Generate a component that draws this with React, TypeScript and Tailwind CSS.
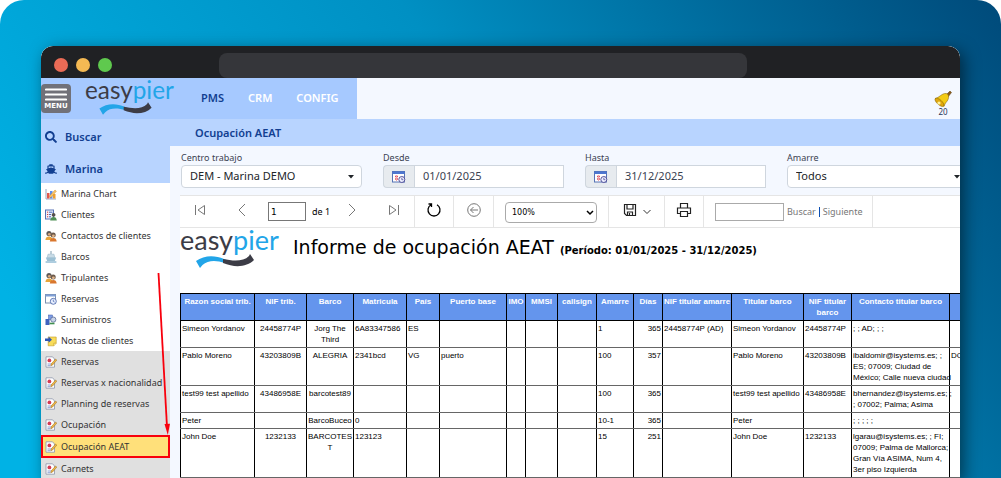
import { useState } from "react";
import { FaSearch, FaShip } from "react-icons/fa";

type IconName =
  | "chart"
  | "client"
  | "people"
  | "boat"
  | "calendar"
  | "supply"
  | "note"
  | "report";

const marinaLinks: { label: string; icon: IconName }[] = [
  { label: "Marina Chart", icon: "chart" },
  { label: "Clientes", icon: "client" },
  { label: "Contactos de clientes", icon: "people" },
  { label: "Barcos", icon: "boat" },
  { label: "Tripulantes", icon: "people" },
  { label: "Reservas", icon: "calendar" },
  { label: "Suministros", icon: "supply" },
  { label: "Notas de clientes", icon: "note" },
];

const reportLinks = [
  "Reservas",
  "Reservas x nacionalidad",
  "Planning de reservas",
  "Ocupación",
  "Ocupación AEAT",
  "Carnets",
];

const columns = [
  { title: "Razon social trib.", width: "w-[74px]", align: "text-left" },
  { title: "NIF trib.", width: "w-[52px]", align: "text-center" },
  { title: "Barco", width: "w-[47px]", align: "text-center" },
  { title: "Matricula", width: "w-[53px]", align: "text-left" },
  { title: "País", width: "w-[33px]", align: "text-left" },
  { title: "Puerto base", width: "w-[67px]", align: "text-left" },
  { title: "IMO", width: "w-[19px]", align: "text-left" },
  { title: "MMSI", width: "w-[32px]", align: "text-left" },
  { title: "callsign", width: "w-[39px]", align: "text-left" },
  { title: "Amarre", width: "w-[37px]", align: "text-left" },
  { title: "Días", width: "w-[29px]", align: "text-right" },
  { title: "NIF titular amarre", width: "w-[69px]", align: "text-left" },
  { title: "Titular barco", width: "w-[72px]", align: "text-left" },
  { title: "NIF titular\nbarco", width: "w-[48px]", align: "text-left" },
  { title: "Contacto titular barco", width: "w-[98px]", align: "text-left" },
  { title: "", width: "w-[60px]", align: "text-left" },
];

const rows = [
  ["Simeon Yordanov", "24458774P", "Jorg The\nThird", "6A83347586", "ES", "", "", "", "", "1", "365", "24458774P (AD)", "Simeon Yordanov", "24458774P", "; ; AD; ; ;", ""],
  ["Pablo Moreno", "43203809B", "ALEGRIA", "2341bcd", "VG", "puerto", "", "", "", "100", "357", "", "Pablo Moreno", "43203809B", "ibaldomir@isystems.es; ;\nES; 07009; Ciudad de\nMéxico; Calle nueva ciudad", "DC"],
  ["test99 test apellido", "43486958E", "barcotest89", "", "", "", "", "", "", "100", "365", "", "test99 test apellido", "43486958E", "bhernandez@isystems.es; ;\n; 07002; Palma; Asima", ""],
  ["Peter", "", "BarcoBuceo", "0", "", "", "", "", "", "10-1", "365", "", "Peter", "", "; ; ; ; ;", ""],
  ["John Doe", "1232133", "BARCOTES\nT", "123123", "", "", "", "", "", "15", "251", "", "John Doe", "1232133", "lgarau@isystems.es; ; FI;\n07009; Palma de Mallorca;\nGran Vía ASIMA, Num 4,\n3er piso Izquierda", ""],
];

function MenuIcon({ name }: { name: IconName }) {
  return (
    <svg viewBox="0 0 12 12" className="size-3 shrink-0" aria-hidden="true">
      {name === "chart" && (
        <>
          <path d="M1 1v10h10" fill="none" stroke="#9aa7c0" />
          <rect x="2" y="5" width="2.5" height="5.5" fill="#e2574c" />
          <rect x="5" y="3" width="2.5" height="7.5" fill="#5b8def" />
          <rect x="8" y="6" width="2.5" height="4.5" fill="#f0a030" />
          <path d="M4 8.5 10 2l1.4 1.2L6 9.6z" fill="#f7c56b" stroke="#c77d1c" strokeWidth=".4" />
        </>
      )}
      {name === "client" && (
        <>
          <rect x=".5" y="1" width="8" height="9" fill="#eef2fb" stroke="#5872b5" />
          <path d="M2 3.2h1.2M2 5.5h1.2M2 7.8h1.2" stroke="#d33" />
          <path d="M4 3.2h3.5M4 5.5h2M4 7.8h2" stroke="#4766b8" />
          <circle cx="8.6" cy="5.8" r="1.9" fill="#55504c" />
          <path d="M5.2 11.6c.2-2.6 1.6-3.6 3.4-3.6s3 1 3.2 3.6z" fill="#4f8f55" />
        </>
      )}
      {name === "people" && (
        <>
          <circle cx="4" cy="3.6" r="2.6" fill="#5f5a57" />
          <circle cx="4.3" cy="4.3" r="1.4" fill="#d9a77a" />
          <path d="M.4 10c.2-2.7 1.6-3.6 3.6-3.6s3 .8 3.4 3.6z" fill="#e7a53a" />
          <circle cx="8.2" cy="5" r="2.5" fill="#6c5a4b" />
          <circle cx="8.4" cy="5.8" r="1.4" fill="#e0b48a" />
          <path d="M4.8 11.6c.2-2.7 1.6-3.6 3.5-3.6s3.1.9 3.4 3.6z" fill="#d9772e" />
        </>
      )}
      {name === "boat" && (
        <>
          <path d="M6 0v3" stroke="#7f9db0" />
          <path d="M3 3.2h6l.8 3.6H2.2z" fill="#c8dbe6" stroke="#8fb0c2" strokeWidth=".5" />
          <path d="M.8 6.6h10.4L9.8 10H2.2z" fill="#9cc0d4" />
          <path d="M.6 11h10.8" stroke="#5f9cc0" />
        </>
      )}
      {name === "calendar" && (
        <>
          <rect x=".5" y="1.5" width="10" height="8.5" fill="#fff" stroke="#7a8fae" />
          <rect x=".5" y="1.5" width="10" height="2" fill="#7f9fd6" />
          <circle cx="8.3" cy="8.3" r="3" fill="#e9f0ff" stroke="#4461a8" strokeWidth=".8" />
          <path d="M8.3 6.6v1.8l1.3.6" fill="none" stroke="#4461a8" strokeWidth=".7" />
        </>
      )}
      {name === "supply" && (
        <>
          <rect x=".5" y="5" width="4" height="6" fill="#3f63c0" />
          <rect x="3.5" y="1" width="4" height="4.5" fill="#7c9be4" stroke="#3c5aa8" strokeWidth=".5" />
          <circle cx="8.3" cy="5.6" r="2.6" fill="#c8d3e8" stroke="#4a5d8d" strokeWidth=".7" />
          <path d="M4.5 9.5h5" stroke="#3f8f4f" strokeWidth="1.6" />
        </>
      )}
      {name === "note" && (
        <>
          <path d="M3.2 2h8v6.2l-2.4 2.6H3.2z" fill="#f8dc5a" stroke="#c39a24" strokeWidth=".6" />
          <path d="M11.2 8.2H8.8v2.6" fill="#fff3b0" stroke="#c39a24" strokeWidth=".6" />
          <path d="M0 3.4h3.6V1.6L7 4.7 3.6 7.8V6H0z" fill="#2d55b5" />
        </>
      )}
      {name === "report" && (
        <>
          <path d="M1 .8h6.5L9.5 3v8.2H1z" fill="#fff" stroke="#8a93a8" strokeWidth=".8" />
          <circle cx="4.4" cy="4.4" r="1.9" fill="#d43c55" />
          <path d="M2.5 8h4.6M2.5 9.7h3" stroke="#7089c9" strokeWidth=".8" />
          <path d="m5.8 9.8.5-2L10.6 3l1.2 1.1-4.2 4.9z" fill="#f2b944" stroke="#96691c" strokeWidth=".5" />
        </>
      )}
    </svg>
  );
}

function Logo({ className }: { className: string }) {
  return (
    <svg viewBox="0 -7 100 45" className={className} role="img" aria-label="easypier">
      <text x="0" y="19" fontFamily="Lato, sans-serif" fontSize="27" fontWeight="400">
        <tspan fill="#3c3c46">easy</tspan>
        <tspan fill="#22a5e8">pier</tspan>
      </text>
      <path d="M16 30c8-6 19-6 28-2l4 1.600-3 2.400c-9-3-17-3-22.500 2L20 37z" fill="#22a5e8" />
      <path d="M43 28c10 2 20 3 26-3l1-2 4 6c-7 7-19 8-31 3z" fill="#3c3c46" />
    </svg>
  );
}

function CalendarButton({ label }: { label: string }) {
  return (
    <button
      type="button"
      aria-label={label}
      className="flex w-[31px] shrink-0 items-center justify-center rounded-l border border-r-0 border-[#cfd6de] bg-[#e7ebef]"
    >
      <svg viewBox="0 0 14 14" className="size-3.5">
        <rect x=".5" y="1.500" width="12" height="10.500" fill="#fff" stroke="#5572b5" />
        <rect x=".5" y="1.500" width="12" height="2.500" fill="#4d76d0" />
        <path d="M3 6.500h3M3 9h3" stroke="#e0525e" strokeWidth="1.500" />
        <path d="M4.500 5v6" stroke="#f3a3a8" />
        <circle cx="9.800" cy="9.500" r="3" fill="#eef0ff" stroke="#53529a" />
        <path d="M9.800 7.800v1.900h1.500" fill="none" stroke="#53529a" strokeWidth=".8" />
      </svg>
    </button>
  );
}

function DateField({ id, label, initial }: { id: string; label: string; initial: string }) {
  const [value, setValue] = useState(initial);

  return (
    <div className="w-[181px] shrink-0">
      <label htmlFor={id} className="block text-[9px] leading-3 text-[#3b4252]">
        {label}
      </label>
      <div className="mt-px flex h-[23px]">
        <CalendarButton label={`${label} calendario`} />
        <input
          id={id}
          type="text"
          value={value}
          onChange={(e) => setValue(e.target.value)}
          className="w-full min-w-0 border border-[#cfd6de] bg-white px-2 text-[11px] text-[#3b4252]"
        />
      </div>
    </div>
  );
}

function SelectField({ id, label, option }: { id: string; label: string; option: string }) {
  return (
    <div className="w-[181px] shrink-0">
      <label htmlFor={id} className="block text-[9px] leading-3 text-[#3b4252]">
        {label}
      </label>
      <div className="relative mt-px">
        <select
          id={id}
          className="block h-[23px] w-full appearance-none rounded border border-[#cfd6de] bg-white px-2 text-[11px] text-[#212529]"
        >
          <option>{option}</option>
        </select>
        <svg viewBox="0 0 6 4" className="pointer-events-none absolute top-2.5 right-2 h-1 w-1.5">
          <path d="M0 0h6L3 3.500z" fill="#212529" />
        </svg>
      </div>
    </div>
  );
}

function BrowserBar() {
  return (
    <div className="flex h-8 items-end rounded-t-xl bg-[#202124] pl-[13px]">
      <div className="flex gap-2 self-center pt-1.5">
        <span className="size-3.5 rounded-full bg-[#ea6b56]" />
        <span className="size-3.5 rounded-full bg-[#f5b953]" />
        <span className="size-3.5 rounded-full bg-[#5fc94e]" />
      </div>
      <div className="mr-[213px] ml-[107px] h-[25px] flex-1 rounded-lg bg-[#35363a]" />
    </div>
  );
}

function Header() {
  return (
    <header className="flex h-[41px] justify-between bg-[#f4f8ff]">
      <div className="flex w-[316px] items-center bg-[#a6c9ff]">
        <button
          type="button"
          className="flex h-[29px] w-[30px] flex-col items-center rounded-sm bg-[#717179] pt-1 text-white"
        >
          <svg viewBox="0 0 22 14" className="h-3.5 w-[22px]" aria-hidden="true">
            <path d="M1 1.500h20M1 6.500h20M1 11.500h20" stroke="#fff" strokeWidth="2.200" strokeLinecap="round" />
          </svg>
          <span className="font-['DejaVu_Sans',sans-serif] text-[7px] leading-2 font-bold">MENU</span>
        </button>
        <Logo className="-mt-1.5 ml-3.5 h-[41px] w-[90px]" />
        <nav className="ml-[26px] flex gap-6 text-[11px] font-semibold text-white">
          <a href="#pms" className="text-[#123f91]">
            PMS
          </a>
          <a href="#crm">CRM</a>
          <a href="#config">CONFIG</a>
        </nav>
      </div>
      <button type="button" aria-label="Avisos" className="flex flex-col items-center pt-3 pr-2 text-[8px] leading-2 text-[#27365a]">
        <svg viewBox="0 0 18 18" className="size-[18px]">
          <path d="m12 5 4-4 1.500 1.500L14 7z" fill="#8a5a18" stroke="#5d3d10" strokeWidth=".5" />
          <path d="M1 8.500C5 8 8 3 12 3.500c3 .5 3 4 2 6-1 2.500-3 3-4 7z" fill="#f3cb14" stroke="#8f6c0a" strokeWidth=".6" />
          <ellipse cx="5.500" cy="12.300" rx="2.400" ry="5.600" transform="rotate(-48 5.500 12.300)" fill="#e0a80e" stroke="#8f6c0a" strokeWidth=".6" />
          <circle cx="5" cy="13" r="1.600" fill="#fff09a" />
        </svg>
        20
      </button>
    </header>
  );
}

function Sidebar() {
  return (
    <aside className="relative w-[129px] shrink-0 bg-white text-[9px] text-[#333]">
      <div className="bg-[#b8d4ff] text-[11px] font-semibold text-[#123f91]">
        <a href="#buscar" className="flex h-9 items-center gap-2 pl-1">
          <FaSearch className="size-3" />
          Buscar
        </a>
        <a href="#marina" className="flex h-7 items-center gap-2 pl-1">
          <FaShip className="size-3" />
          Marina
        </a>
      </div>
      <ul>
        {marinaLinks.map((link) => (
          <li key={link.label}>
            <a href="#marina" className="flex h-[21px] items-center gap-1 pl-1 whitespace-nowrap">
              <MenuIcon name={link.icon} />
              {link.label}
            </a>
          </li>
        ))}
      </ul>
      <ul className="bg-[#e0e0e0]">
        {reportLinks.map((label) => (
          <li key={label}>
            <a
              href="#informes"
              className={
                label === "Ocupación AEAT"
                  ? "flex h-[23px] items-center gap-1 bg-[#ffe07a] pl-1 whitespace-nowrap outline-2 -outline-offset-2 outline-[#f8000c]"
                  : "flex h-[21px] items-center gap-1 pl-1 whitespace-nowrap"
              }
            >
              <MenuIcon name="report" />
              {label}
            </a>
          </li>
        ))}
      </ul>
      <svg viewBox="0 0 16 166" className="absolute top-[153px] right-0 z-10 h-[166px] w-4" aria-hidden="true">
        <path d="M4.500 1 13 155" stroke="#f8000c" strokeWidth="1.800" fill="none" />
        <path d="m10.500 152 5.500-.3-2.200 11.300z" fill="#f8000c" />
      </svg>
    </aside>
  );
}

function PageIcon({ d, label, width }: { d: string; label: string; width: string }) {
  return (
    <button type="button" aria-label={label} className={width}>
      <svg viewBox="0 0 14 16" className="mx-auto h-4 w-3.5 fill-none stroke-[#777]">
        <path d={d} />
      </svg>
    </button>
  );
}

function ReportToolbar() {
  const [page, setPage] = useState("1");
  const [zoom, setZoom] = useState("100%");

  return (
    <div className="flex h-[33px] border-y border-[#e5e5e5] text-[9px] text-[#777]">
      <div className="flex w-[235px] shrink-0 items-center border-r border-[#e5e5e5] pb-1 pl-2.5">
        <PageIcon label="Primera página" width="w-5" d="M2.500 3v10M11.500 3.500v9L5 8z" />
        <PageIcon label="Página anterior" width="w-16" d="M10 2 4 8l6 6" />
        <label className="flex shrink-0 items-center gap-1.5 whitespace-nowrap text-black">
          <input
            type="text"
            aria-label="Página"
            value={page}
            onChange={(e) => setPage(e.target.value)}
            className="mt-1 -ml-1.5 h-[19px] w-[38px] border border-[#777] px-0.5 font-['DejaVu_Sans',sans-serif]"
          />
          <span className="mt-1">de 1</span>
        </label>
        <PageIcon label="Página siguiente" width="w-11" d="m4 2 6 6-6 6" />
        <PageIcon label="Última página" width="w-10" d="M11.500 3v10M2.500 3.500v9L9 8z" />
      </div>
      <button type="button" aria-label="Actualizar" className="w-[39px] shrink-0 border-r border-[#e5e5e5] pb-1">
        <svg viewBox="0 0 16 16" className="mx-auto size-4 fill-none stroke-black stroke-[1.300]">
          <path d="M5 2.800a6 6 0 1 0 6 0M2.500 2h3v3" />
        </svg>
      </button>
      <button type="button" aria-label="Atrás" className="w-10 shrink-0 border-r border-[#e5e5e5] pb-1">
        <svg viewBox="0 0 16 16" className="mx-auto size-4 fill-none stroke-[#777]">
          <circle cx="8" cy="8" r="6.300" />
          <path d="M12 8H4.500M7.500 5l-3 3 3 3" />
        </svg>
      </button>
      <div className="relative w-[115px] shrink-0 border-r border-[#e5e5e5] pt-1.5 pl-[11px]">
        <select
          aria-label="Zoom"
          value={zoom}
          onChange={(e) => setZoom(e.target.value)}
          className="h-[21px] w-[92px] appearance-none rounded border border-[#aaa] bg-white px-1.5 font-['DejaVu_Sans',sans-serif] text-[8px] text-black"
        >
          <option>100%</option>
          <option>150%</option>
        </select>
        <svg viewBox="0 0 8 6" className="pointer-events-none absolute top-3.5 right-[14px] h-1.5 w-2">
          <path d="m1 1 3 3 3-3" fill="none" stroke="#000" strokeWidth="1.500" />
        </svg>
      </div>
      <button type="button" aria-label="Exportar" className="flex w-14 shrink-0 items-center gap-1.5 border-r border-[#e5e5e5] pb-1 pl-3.5">
        <svg viewBox="0 0 14 14" className="size-3.5 fill-none stroke-[#222] stroke-[1.200]">
          <path d="M1.500 1.500h11v11h-9l-2-2zM4 1.500v4.500h6V1.500M4.500 12.500V9h5v3.500M6.500 10v2" />
        </svg>
        <svg viewBox="0 0 8 6" className="mt-1 h-1.5 w-2">
          <path d="m.5 1 3.500 3.500L7.500 1" fill="none" stroke="#333" />
        </svg>
      </button>
      <button type="button" aria-label="Imprimir" className="w-[39px] shrink-0 border-r border-[#e5e5e5] pb-1">
        <svg viewBox="0 0 16 16" className="mx-auto size-4 fill-none stroke-[#222] stroke-[1.200]">
          <path d="M4.500 6V1.500h7V6M4 11.500H1.500V6h13v5.500H12M4.500 9.500h7v5h-7z" />
        </svg>
      </button>
      <div className="flex w-[169px] shrink-0 items-center gap-[3px] border-r border-[#e5e5e5] pl-[11px] whitespace-nowrap">
        <input type="text" aria-label="Texto a buscar" className="h-[18px] w-[69px] border border-[#aaa]" />
        <button type="button">Buscar</button>
        <span className="h-2.5 w-px bg-[#0b4fb3]" />
        <button type="button">Siguiente</button>
      </div>
    </div>
  );
}

function ReportTable() {
  return (
    <table className="mt-[23px] w-[829px] table-fixed border-collapse font-['Liberation_Sans',Arial,sans-serif] text-[8px] leading-[11px] text-black">
      <thead>
        <tr className="h-[27px] bg-[#6495ed] text-white">
          {columns.map((col) => (
            <th
              key={col.title}
              className={`${col.width} border border-black px-0 py-0.5 align-top font-bold whitespace-pre`}
            >
              {col.title}
            </th>
          ))}
        </tr>
      </thead>
      <tbody>
        {rows.map((row) => (
          <tr key={row[0]}>
            {row.map((cell, i) => (
              <td
                key={i}
                className={`${columns[i].align} border border-x-black border-y-[#666] px-px py-0.5 align-top whitespace-pre`}
              >
                {cell}
              </td>
            ))}
          </tr>
        ))}
      </tbody>
    </table>
  );
}

export default function App() {
  return (
    <div className="min-h-screen overflow-hidden rounded-t-3xl bg-linear-55 from-[#00b2e5] from-10% via-[#0090c3] via-55% to-[#004a7a] px-[41px] pt-[46px] font-['Noto_Sans',sans-serif]">
      <div className="overflow-hidden rounded-t-xl bg-white shadow-[4px_4px_16px_rgba(0,0,0,0.5)]">
        <BrowserBar />
        <Header />
        <div className="flex">
          <Sidebar />
          <main className="min-w-0 flex-1 overflow-hidden bg-[#f4f8ff]">
            <h1 className="h-[27px] bg-[#b8d4ff] pl-[25px] text-[11px] leading-[27px] font-semibold text-[#123f91]">
              Ocupación AEAT
            </h1>
            <div className="flex gap-[21px] pt-1.5 pl-[11px]">
              <SelectField id="centro" label="Centro trabajo" option="DEM - Marina DEMO" />
              <DateField id="desde" label="Desde" initial="01/01/2025" />
              <DateField id="hasta" label="Hasta" initial="31/12/2025" />
              <SelectField id="amarre" label="Amarre" option="Todos" />
            </div>
            <section className="mt-[7px] ml-2.5 bg-white">
              <ReportToolbar />
              <div className="flex h-[42px] items-start font-['DejaVu_Sans',sans-serif] text-black">
                <Logo className="-mt-1 h-[45px] w-[100px] shrink-0" />
                <h2 className="mt-[3px] ml-[13px] text-[19px] leading-8 whitespace-nowrap">
                  Informe de ocupación AEAT{" "}
                  <span className="text-[10px] font-bold">(Período: 01/01/2025 - 31/12/2025)</span>
                </h2>
              </div>
              <ReportTable />
            </section>
          </main>
        </div>
      </div>
    </div>
  );
}
